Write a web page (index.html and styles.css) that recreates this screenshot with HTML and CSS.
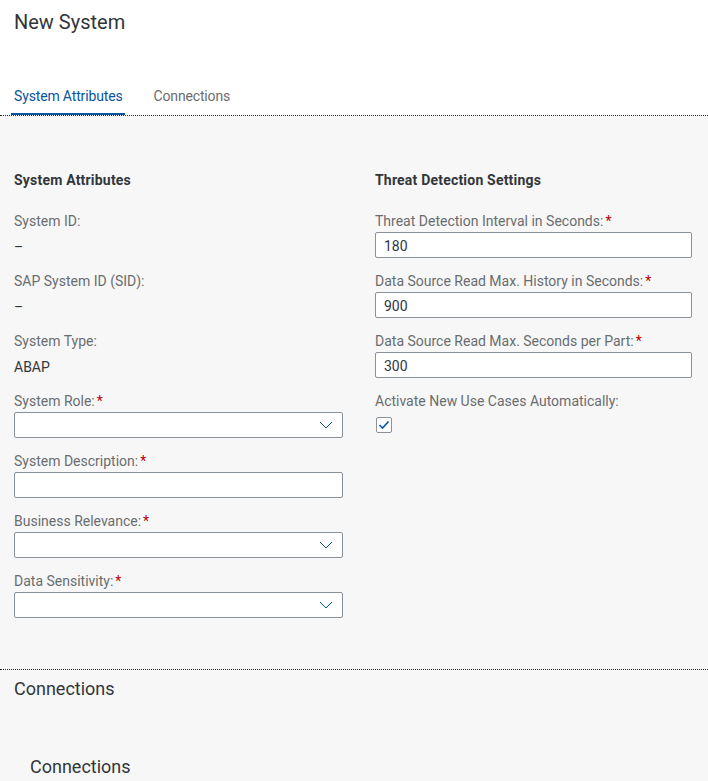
FILE: index.html
```html
<!DOCTYPE html>
<html lang="en">
<head>
<meta charset="utf-8">
<title>New System</title>
<link rel="stylesheet" href="styles.css">
</head>
<body>
<div class="page">
  <header class="head">
    <h1 class="title">New System</h1>
    <nav class="tabs">
      <div class="tab active">System Attributes</div>
      <div class="tab">Connections</div>
    </nav>
  </header>

  <section class="content">
    <div class="form">
      <div class="col col-left">
        <h2 class="group-title">System Attributes</h2>
        <div class="field">
          <div class="label">System ID:</div>
          <div class="value">–</div>
        </div>
        <div class="field">
          <div class="label">SAP System ID (SID):</div>
          <div class="value">–</div>
        </div>
        <div class="field">
          <div class="label">System Type:</div>
          <div class="value">ABAP</div>
        </div>
        <div class="field">
          <div class="label">System Role:<span class="req">*</span></div>
          <div class="input select">
            <svg class="chev" width="14" height="8" viewBox="0 0 14 8"><path d="M1 1 L7 7 L13 1" fill="none" stroke="#0854a0" stroke-width="1"/></svg>
          </div>
        </div>
        <div class="field">
          <div class="label">System Description:<span class="req">*</span></div>
          <div class="input"></div>
        </div>
        <div class="field">
          <div class="label">Business Relevance:<span class="req">*</span></div>
          <div class="input select">
            <svg class="chev" width="14" height="8" viewBox="0 0 14 8"><path d="M1 1 L7 7 L13 1" fill="none" stroke="#0854a0" stroke-width="1"/></svg>
          </div>
        </div>
        <div class="field">
          <div class="label">Data Sensitivity:<span class="req">*</span></div>
          <div class="input select">
            <svg class="chev" width="14" height="8" viewBox="0 0 14 8"><path d="M1 1 L7 7 L13 1" fill="none" stroke="#0854a0" stroke-width="1"/></svg>
          </div>
        </div>
      </div>

      <div class="col col-right">
        <h2 class="group-title">Threat Detection Settings</h2>
        <div class="field">
          <div class="label">Threat Detection Interval in Seconds:<span class="req">*</span></div>
          <div class="input">180</div>
        </div>
        <div class="field">
          <div class="label">Data Source Read Max. History in Seconds:<span class="req">*</span></div>
          <div class="input">900</div>
        </div>
        <div class="field">
          <div class="label">Data Source Read Max. Seconds per Part:<span class="req">*</span></div>
          <div class="input">300</div>
        </div>
        <div class="field">
          <div class="label">Activate New Use Cases Automatically:</div>
          <div class="check-row">
            <span class="checkbox">
              <svg width="12" height="10" viewBox="0 0 12 10"><path d="M1.5 5 L4.5 8 L10.5 1.5" fill="none" stroke="#0854a0" stroke-width="1.6"/></svg>
            </span>
          </div>
        </div>
      </div>
    </div>
  </section>

  <section class="conn">
    <h2 class="conn-title">Connections</h2>
    <h3 class="conn-sub">Connections</h3>
  </section>
</div>
</body>
</html>
```

FILE: styles.css
```css
html, body {
  margin: 0;
  padding: 0;
}
body {
  font-family: "Roboto", "Liberation Sans", sans-serif;
  font-size: 14px;
  color: #32363a;
  background: #f7f7f7;
}
.page {
  min-height: 781px;
  background: #f7f7f7;
}
.head {
  background: #ffffff;
  padding-top: 10px;
}
.title {
  margin: 0;
  padding-left: 14px;
  font-size: 20px;
  line-height: 24px;
  font-weight: normal;
  color: #32363a;
}
.tabs {
  display: flex;
  gap: 26px;
  margin-top: 53px;
  padding-left: 11px;
  border-bottom: 1px dotted #222;
}
.tab {
  padding: 1px 2px 9px 3px;
  line-height: 16px;
  font-size: 14px;
  letter-spacing: -0.15px;
  color: #6a6d70;
  border-bottom: 2px solid transparent;
}
.tab.active {
  color: #0854a0;
  border-bottom-color: #0854a0;
}
.content {
  padding: 55px 0 51px 14px;
  border-bottom: 1px dotted #222;
}
.form {
  display: grid;
  grid-template-columns: 329px 317px;
  column-gap: 32px;
}
.group-title {
  margin: 0 0 22px;
  font-size: 14px;
  line-height: 18px;
  font-weight: bold;
  letter-spacing: 0.2px;
  color: #32363a;
}
.field {
  margin-bottom: 13px;
}
.field:last-child {
  margin-bottom: 0;
}
.label {
  line-height: 18px;
  padding-top: 1px;
  margin-bottom: 2px;
  color: #6a6d70;
  white-space: nowrap;
}
.req {
  color: #bb0000;
  margin-left: 2px;
}
.value {
  box-sizing: border-box;
  height: 26px;
  padding-top: 2px;
  line-height: 26px;
  color: #32363a;
}
.input {
  box-sizing: border-box;
  height: 26px;
  background: #ffffff;
  border: 1px solid #89919a;
  border-radius: 2px;
  padding: 2px 8px 0;
  line-height: 22px;
  color: #32363a;
  display: flex;
  align-items: center;
  justify-content: space-between;
}
.select {
  justify-content: flex-end;
  padding: 0 9px 0 8px;
}
.chev {
  display: block;
}
.check-row {
  height: 26px;
  display: flex;
  align-items: center;
  padding-left: 1px;
}
.checkbox {
  box-sizing: border-box;
  width: 16px;
  height: 16px;
  border: 1px solid #89919a;
  border-radius: 2px;
  background: #ffffff;
  display: flex;
  align-items: center;
  justify-content: center;
}
.checkbox svg {
  display: block;
}
.conn {
  padding: 8px 0 0 14px;
}
.conn-title {
  margin: 0;
  font-size: 18px;
  line-height: 22px;
  font-weight: normal;
  color: #32363a;
}
.conn-sub {
  margin: 56px 0 0 16px;
  font-size: 18px;
  line-height: 22px;
  font-weight: normal;
  color: #32363a;
}
```
